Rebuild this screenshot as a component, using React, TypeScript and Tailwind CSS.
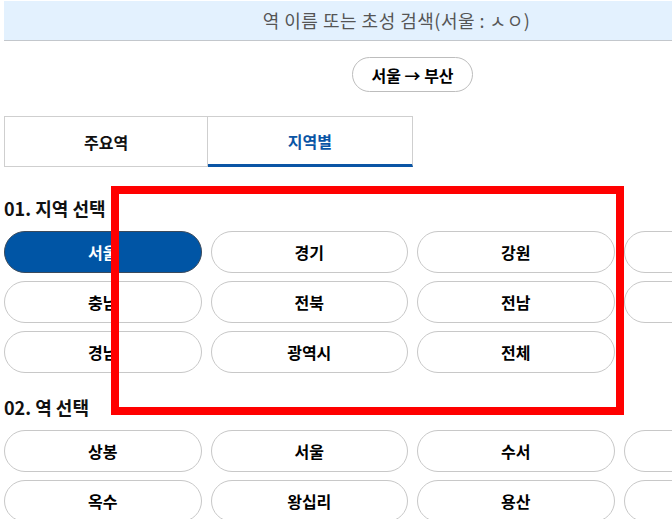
import React from 'react';

const regions = ['서울', '경기', '강원', '충북', '충남', '전북', '전남', '경북', '경남', '광역시', '전체'];
const stations = ['상봉', '서울', '수서', '청량리', '옥수', '왕십리', '용산', '영등포'];

const Pill: React.FC<{ label: string; active?: boolean }> = ({ label, active }) => (
  <button
    className={
      active
        ? 'h-[42px] rounded-full border border-[#3a4a5c] bg-[#0055a5] text-white text-[16px] font-bold'
        : 'h-[42px] rounded-full border border-[#c8c8c8] bg-white text-black text-[16px] font-bold'
    }
  >
    {label}
  </button>
);

export default function App() {
  return (
    <div
      className="relative w-full h-[519px] overflow-hidden bg-white"
      style={{ fontFamily: '"Noto Sans CJK KR", "Noto Sans", sans-serif' }}
    >
      <div className="w-[817px] ml-1">
        {/* search bar */}
        <div className="mt-px h-[40px] bg-[#e3f1fe] border-b border-[#c3c7cc] flex items-center justify-center pr-8">
          <span className="text-[18px] tracking-[0.5px] text-[#555]">역 이름 또는 초성 검색(서울 : ㅅㅇ)</span>
        </div>

        <div className="mt-4 flex justify-center">
          <button className="h-[35px] px-[18px] rounded-full border border-[#bdbdbd] bg-white text-[16px] font-bold text-black">
            서울 → 부산
          </button>
        </div>

        {/* tabs */}
        <div className="mt-6 grid grid-cols-4 h-[51px]">
          <div className="flex items-center justify-center border border-[#cfcfcf] text-[16px] font-bold text-[#111]">
            주요역
          </div>
          <div className="flex items-center justify-center border-t border-r border-[#cfcfcf] border-b-[3px] border-b-[#0a55a5] text-[16px] font-bold text-[#0a55a5]">
            지역별
          </div>
        </div>

        <h2 className="mt-[29px] mb-[11px] h-6 leading-6 text-[18px] font-bold text-[#111]">01. 지역 선택</h2>
        <div className="grid grid-cols-4 gap-x-[9px] gap-y-2">
          {regions.map((r, i) => (
            <Pill key={r} label={r} active={i === 0} />
          ))}
        </div>

        <h2 className="mt-[22px] mb-[11px] h-6 leading-6 text-[18px] font-bold text-[#111]">02. 역 선택</h2>
        <div className="grid grid-cols-4 gap-x-[9px] gap-y-2">
          {stations.map((s) => (
            <Pill key={s} label={s} />
          ))}
        </div>
      </div>

      {/* annotation box */}
      <div className="absolute left-[111px] top-[186px] w-[513px] h-[229px] border-8 border-[#ff0000]" />
    </div>
  );
}
